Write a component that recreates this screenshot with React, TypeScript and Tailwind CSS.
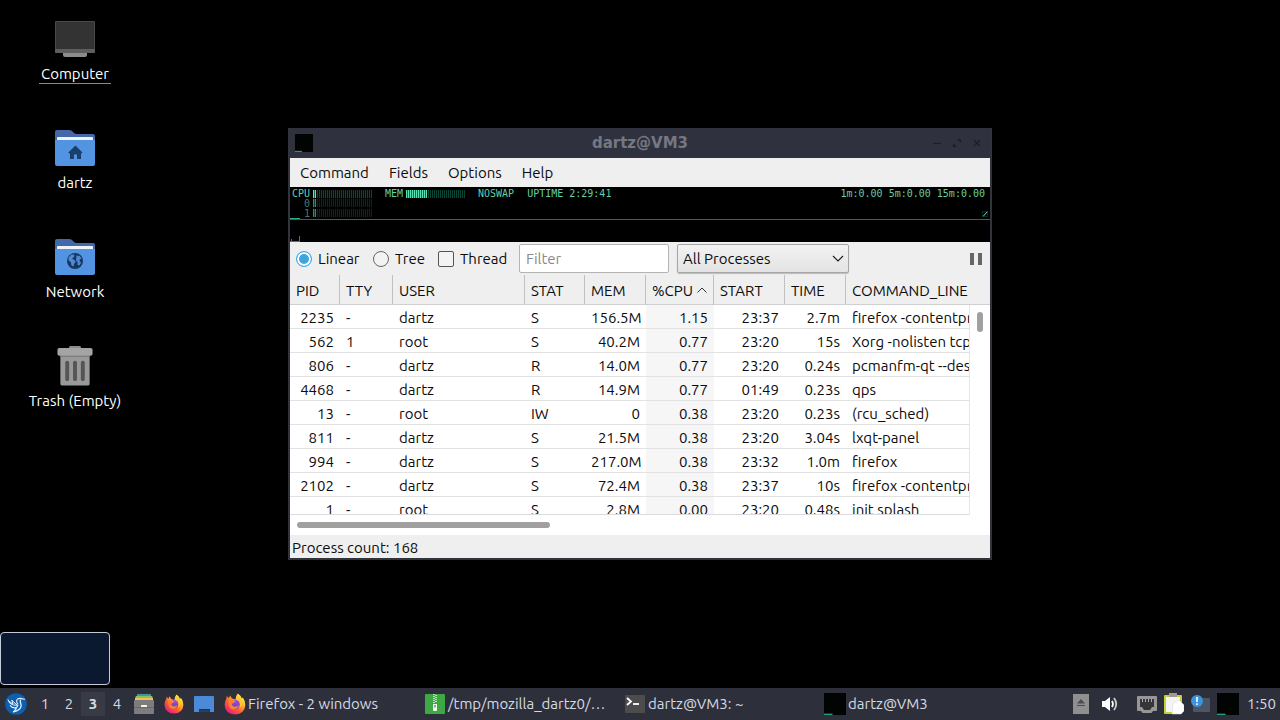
import { useState } from 'react';
import type { ReactNode } from 'react';
import { clsx } from 'clsx';

const columns = [
  { label: 'PID', width: 'w-[50px]', align: 'text-right' },
  { label: 'TTY', width: 'w-[53px]', align: 'text-left' },
  { label: 'USER', width: 'w-[132px]', align: 'text-left' },
  { label: 'STAT', width: 'w-[60px]', align: 'text-left' },
  { label: 'MEM', width: 'w-[61px]', align: 'text-right' },
  { label: '%CPU', width: 'w-[68px]', align: 'text-right' },
  { label: 'START', width: 'w-[71px]', align: 'text-right' },
  { label: 'TIME', width: 'w-[61px]', align: 'text-right' },
  { label: 'COMMAND_LINE', width: '', align: 'text-left' },
];

const processes = [
  ['2235', '-', 'dartz', 'S', '156.5M', '1.15', '23:37', '2.7m', 'firefox -contentpr'],
  ['562', '1', 'root', 'S', '40.2M', '0.77', '23:20', '15s', 'Xorg -nolisten tcp'],
  ['806', '-', 'dartz', 'R', '14.0M', '0.77', '23:20', '0.24s', 'pcmanfm-qt --des'],
  ['4468', '-', 'dartz', 'R', '14.9M', '0.77', '01:49', '0.23s', 'qps'],
  ['13', '-', 'root', 'IW', '0', '0.38', '23:20', '0.23s', '(rcu_sched)'],
  ['811', '-', 'dartz', 'S', '21.5M', '0.38', '23:20', '3.04s', 'lxqt-panel'],
  ['994', '-', 'dartz', 'S', '217.0M', '0.38', '23:32', '1.0m', 'firefox'],
  ['2102', '-', 'dartz', 'S', '72.4M', '0.38', '23:37', '10s', 'firefox -contentpr'],
  ['1', '-', 'root', 'S', '2.8M', '0.00', '23:20', '0.48s', 'init splash'],
];

function FolderIcon({ children }: { children: ReactNode }) {
  return (
    <svg viewBox="0 0 40 40" className="w-10 h-10" aria-hidden="true">
      <path d="M0 4a2 2 0 0 1 2-2h12q2 0 3 1l2 2q1 1 3 1h16a2 2 0 0 1 2 2v14H0z" fill="#4468a8" />
      <rect x="2" y="9" width="36" height="8" rx="1" fill="#eef3fa" />
      <path d="M0 12h40v24a2 2 0 0 1-2 2H2a2 2 0 0 1-2-2z" fill="#5294e2" />
      {children}
    </svg>
  );
}

function ComputerIcon() {
  return (
    <svg viewBox="0 0 40 40" className="w-10 h-10" aria-hidden="true">
      <rect x="0" y="2" width="40" height="32" rx="1" fill="#4a4a4a" />
      <rect x="1" y="3" width="38" height="27" fill="#333" />
      <rect x="0" y="30" width="40" height="4" rx="1" fill="#5e5e5e" />
      <path d="M8 34h24v2a2 2 0 0 1-2 2H10a2 2 0 0 1-2-2z" fill="#8c8c8c" />
    </svg>
  );
}

function HomeIcon() {
  return (
    <FolderIcon>
      <path d="M20.500 17.500l7 7-.8.900H26V31h-4v-4.500h-3V31h-4v-5.600h-.900l-.8-.9z" fill="#1b3f6d" />
    </FolderIcon>
  );
}

function NetworkIcon() {
  return (
    <FolderIcon>
      <circle cx="20" cy="24" r="8" fill="#163762" />
      <path
        d="M13.500 20.500l3-3 3 .3-.5 2.200-2 1.500 2.300 1.500 1.500 1.800-1.600 1.800-.7 3-2-1-.6-3.300-2.400-2zM21.500 18.500l3.200.6 2 2.400-2.200 1 .2 2 1.500 1-1.700 2.800-2-.3.200-3-1.700-1.500.3-2.500z"
        fill="#4f8ad3"
      />
    </FolderIcon>
  );
}

function TrashIcon() {
  return (
    <svg viewBox="0 -1 40 41" className="w-10 h-10" aria-hidden="true">
      <path d="M14 0a1 1 0 0 1 1-1h10a1 1 0 0 1 1 1v3H14z" fill="#8b8b8b" />
      <path d="M5 7h30v31a1.500 1.500 0 0 1-1.500 1.500h-27A1.500 1.500 0 0 1 5 38z" fill="#999" />
      <rect x="2" y="1" width="36" height="8" rx="2" fill="#a4a4a4" />
      <path d="M5 9h30v1H5z" fill="#777" />
      <path d="M12 16v17M20 16v17M28 16v17" stroke="#555" strokeWidth="4" strokeLinecap="round" />
    </svg>
  );
}

const desktopIcons = [
  { label: 'Computer', icon: ComputerIcon, focused: true },
  { label: 'dartz', icon: HomeIcon },
  { label: 'Network', icon: NetworkIcon },
  { label: 'Trash (Empty)', icon: TrashIcon },
];

function QpsIcon({ className }: { className?: string }) {
  return (
    <svg viewBox="0 0 22 22" className={clsx('shrink-0', className)} aria-hidden="true">
      <rect width="22" height="22" fill="#020303" />
      <path d="M0 21.300h8.500" stroke="#2a9a78" strokeWidth="1.400" />
    </svg>
  );
}

function LxqtIcon() {
  return (
    <svg viewBox="0 0 22 22" className="w-[22px] h-[22px]" aria-hidden="true">
      <circle cx="11" cy="11" r="10.800" fill="#0d5fb0" />
      <g fill="none" stroke="#e9f3fc" strokeLinecap="round" strokeLinejoin="round">
        <path d="M19.500 6.300l-4.300-.9q-3-.4-3.600 2.200-.2 1.800 1.200 3.200" strokeWidth="1.100" />
        <path d="M15.500 7q-.8 1.200.2 3.200 1.300 4-1.700 6.300-2 1.600-5.500 2.300" strokeWidth="1.300" />
        <path d="M3 6.800q1 4.400 5.200 5.200l4.300.2-4.200-3.400-1.500-1.700 1.300 4-4.100-2.800" strokeWidth="1" />
        <path d="M5.200 12.500q1.500 2.700 5.300 2.300 2-.5 2.500-2.600M8.500 18.600q2.200-1.300 2.800-3.600" strokeWidth="1.100" />
      </g>
    </svg>
  );
}

function FirefoxIcon({ className }: { className?: string }) {
  return (
    <svg viewBox="0 0 22 22" className={clsx('shrink-0', className)} aria-hidden="true">
      <defs>
        <linearGradient id="fox" x1="0.850" y1="0.100" x2="0.200" y2="0.900">
          <stop offset="0" stopColor="#fff04a" />
          <stop offset="0.350" stopColor="#ffae2b" />
          <stop offset="0.650" stopColor="#ff5a36" />
          <stop offset="1" stopColor="#e8207c" />
        </linearGradient>
        <linearGradient id="globe" x1="0.600" y1="0" x2="0.400" y2="1">
          <stop offset="0" stopColor="#a04be0" />
          <stop offset="1" stopColor="#5a45b8" />
        </linearGradient>
      </defs>
      <path
        d="M13.800 0.600q3 2 3.800 4.600l1.200-.7q2.700 3.500 2.500 7.500Q20.600 21 11 21.500 1.200 21 .6 12q0-3.800 2-6.700V3l2.300 2.200L6 2.500l2 3 3.500 1q.2-3.800 2.300-5.900z"
        fill="url(#fox)"
      />
      <circle cx="11" cy="11.500" r="4.800" fill="url(#globe)" />
      <path d="M4.500 7.500l3.500-1.700 2.300 1.800 1.800.4-2.600 1.900-1.700 1q.6 3 4 2.700 2-.3 3-1.300-1.100 4-5 4.100-4.600-.5-5.300-5z" fill="#ff8030" />
      <path d="M12 6q3.500.4 4.200 3.600.6 3-1 5 3-1.500 3-5.300-.8-4-4.500-6.500z" fill="#ffc83a" />
    </svg>
  );
}

function ArchiverIcon() {
  return (
    <svg viewBox="0 0 20 20" className="w-[22px] h-5 shrink-0" aria-hidden="true">
      <rect width="20" height="20" rx="1" fill="#3ea845" />
      <path d="M9 0v9M11 1v8" stroke="#e8f5e8" strokeWidth="1.500" strokeDasharray="1 1" />
      <path d="M8 10h4v6a1 1 0 0 1-1 1H9a1 1 0 0 1-1-1z" fill="#f4f9f4" />
      <rect x="9.300" y="11" width="1.400" height="2.500" fill="#3ea845" />
    </svg>
  );
}

function TerminalIcon() {
  return (
    <svg viewBox="0 0 22 20" className="w-[22px] h-5 shrink-0" aria-hidden="true">
      <rect x="1" y="1" width="20" height="18" rx="1" fill="#4c4c4c" />
      <path d="M3 4l4 3.500L3 11" fill="none" stroke="#fff" strokeWidth="1.800" />
      <path d="M9 10h6" stroke="#fff" strokeWidth="1.800" />
    </svg>
  );
}

function CabinetIcon() {
  return (
    <svg viewBox="0 0 20 20" className="w-5 h-5" aria-hidden="true">
      <rect x="3" y="0" width="14" height="4" rx="1" fill="#3f9a96" />
      <rect x="1.500" y="2" width="17" height="4" rx="1" fill="#8fbf6a" />
      <rect x="1" y="4" width="18" height="4" fill="#e8c556" />
      <rect y="6" width="20" height="14" rx="1" fill="#7d7d7d" />
      <path d="M0 13.500h20" stroke="#686868" />
      <rect x="7" y="11" width="6" height="2" rx="0.500" fill="#f5f5f5" />
    </svg>
  );
}

function ShowDesktopIcon() {
  return (
    <svg viewBox="0 0 20 16" className="w-5 h-4" aria-hidden="true">
      <path d="M1 0h18a1 1 0 0 1 1 1v15h-4v-3H5v3H0V1a1 1 0 0 1 1-1z" fill="#4a8ad8" />
      <path d="M5 14h10v2H5z" fill="#2b3f60" />
    </svg>
  );
}

function LedBar({ fill }: { fill: string }) {
  return (
    <span className="flex h-2 w-[59px] bg-[repeating-linear-gradient(90deg,#0e4435_0_1px,#020a08_1px_2px)]">
      <span className={clsx('h-full bg-[repeating-linear-gradient(90deg,#5be3b4_0_1px,#14664e_1px_2px)]', fill)} />
    </span>
  );
}

function LedPanel() {
  return (
    <section className="relative bg-black h-[55px] font-['DejaVu_Sans_Mono','Liberation_Mono',monospace] text-[10px] leading-[9px] text-[#5fd0a9]">
      <div className="flex h-8 border-b border-[#555] box-content pl-0.5 pr-[5px]">
        <div className="flex flex-col w-20 pt-0.5">
          <div className="flex items-center justify-between h-[9px]">
            <span>CPU</span>
            <LedBar fill="w-[3px]" />
          </div>
          {['0', '1'].map((core) => (
            <div key={core} className="flex items-center justify-between h-[10px] text-[#4f7467]">
              <span className="pl-3">{core}</span>
              <span className="opacity-60">
                <LedBar fill="w-[3px]" />
              </span>
            </div>
          ))}
        </div>
        <div className="flex items-center justify-between h-[9px] w-20 ml-[13px] mt-0.5">
          <span>MEM</span>
          <LedBar fill="w-[21px]" />
        </div>
        <span className="ml-[13px] mt-0.5">NOSWAP</span>
        <span className="ml-[13px] mt-0.5">UPTIME 2:29:41</span>
        <span className="ml-auto mt-0.5">1m:0.00 5m:0.00 15m:0.00</span>
      </div>
      <svg viewBox="0 0 12 24" className="absolute left-0 bottom-0 w-3 h-6" aria-hidden="true">
        <path d="M0 .5h10" stroke="#2fae85" />
        <path d="M1.500 21v3M9.500 18v6M0 23.500h10" stroke="#6a4fe0" fill="none" />
      </svg>
      <svg viewBox="0 0 6 6" className="absolute right-0.5 top-6 w-1.5 h-1.5" aria-hidden="true">
        <path d="M1 5.500L5.500 0.500" stroke="#7fe0bd" />
        <rect x="0.500" y="0.500" width="5" height="5" stroke="#0e4435" strokeOpacity="0.600" fill="none" />
      </svg>
    </section>
  );
}

function Toolbar() {
  const [view, setView] = useState('linear');
  const [thread, setThread] = useState(false);
  const radio =
    'appearance-none w-4 h-4 rounded-full border border-[#666] bg-[#f3f3f3] checked:border-[#3daee9] checked:bg-[#3ea6dc] checked:shadow-[inset_0_0_0_2px_#fff]';

  return (
    <div className="flex items-center h-[33px] pl-1.5 pr-2 bg-[#efefef]">
      <label className="flex items-center gap-1.5 w-[77px]">
        <input type="radio" name="view" className={radio} checked={view === 'linear'} onChange={() => setView('linear')} />
        Linear
      </label>
      <label className="flex items-center gap-1.5 w-[65px]">
        <input type="radio" name="view" className={radio} checked={view === 'tree'} onChange={() => setView('tree')} />
        Tree
      </label>
      <label className="flex items-center gap-1.5 w-[81px]">
        <input
          type="checkbox"
          className="appearance-none w-4 h-4 rounded-xs border border-[#555] bg-[#f3f3f3] checked:bg-[#3ea6dc]"
          checked={thread}
          onChange={(e) => setThread(e.target.checked)}
        />
        Thread
      </label>
      <input
        type="text"
        placeholder="Filter"
        aria-label="Filter"
        className="w-[150px] h-[29px] px-1.5 bg-white border border-[#b4b4b4] rounded-xs placeholder:text-[#8a8a8a]"
      />
      <div className="relative ml-2">
        <select
          aria-label="Process filter"
          className="appearance-none w-[172px] h-[29px] px-[5px] border border-[#a6a6a6] rounded-xs bg-linear-to-b from-[#f2f2f2] to-[#e4e4e4] shadow-[0_1px_1px_#bbb]"
        >
          <option>All Processes</option>
        </select>
        <svg viewBox="0 0 12 7" className="absolute right-[5px] top-[11px] w-3 h-[7px] pointer-events-none" aria-hidden="true">
          <path d="M1 1l5 5 5-5" fill="none" stroke="#222" strokeWidth="1.200" />
        </svg>
      </div>
      <button className="ml-auto flex gap-1" aria-label="Pause">
        <span className="w-1 h-3 bg-[#666]" />
        <span className="w-1 h-3 bg-[#666]" />
      </button>
    </div>
  );
}

function ProcessTable() {
  return (
    <div className="flex h-60 bg-white">
      <div className="flex-1 min-w-0 overflow-hidden border-b border-[#dcdcdc]">
        <table className="w-full table-fixed border-separate border-spacing-0">
          <thead>
            <tr className="h-[30px] bg-[#efefef]">
              {columns.map((col, i) => (
                <th
                  key={col.label}
                  className={clsx(
                    'p-0 pl-1.5 pt-0.5 leading-5 text-left font-normal whitespace-nowrap border-b border-b-[#d0d0d0]',
                    i < columns.length - 1 && 'border-r border-r-[#c0c0c0]',
                    col.width
                  )}
                >
                  {col.label}
                  {col.label === '%CPU' && (
                    <svg viewBox="0 0 10 6" className="inline w-[10px] h-1.5 ml-1 mb-1" aria-hidden="true">
                      <path d="M.5 5.500L5 1l4.500 4.500" fill="none" stroke="#333" />
                    </svg>
                  )}
                </th>
              ))}
            </tr>
          </thead>
          <tbody>
            {processes.map((row) => (
              <tr key={row[0]} className="h-6">
                {row.map((cell, i) => (
                  <td
                    key={columns[i].label}
                    className={clsx(
                      'pt-[3px] pb-0 leading-5 overflow-hidden whitespace-nowrap border-b border-[#e2e2e2]',
                      columns[i].align,
                      columns[i].label === '%CPU' && 'bg-[#f6f6f6]',
                      i === columns.length - 1 ? 'pl-1.5 pr-0' : 'px-1.5'
                    )}
                  >
                    {cell}
                  </td>
                ))}
              </tr>
            ))}
          </tbody>
        </table>
      </div>
      <div className="w-[21px] flex flex-col">
        <div className="h-[30px] bg-[#efefef] border-b border-[#d0d0d0]" />
        <div className="flex-1 flex justify-center pt-[7px] border-l border-[#e6e6e6]">
          <div className="w-1.5 h-5 rounded-full bg-[#a0a0a0]" />
        </div>
      </div>
    </div>
  );
}

function QpsWindow() {
  return (
    <main className="absolute left-72 top-32 w-[704px] bg-[#2f323e] border-2 border-t-0 border-[#32343c] text-[#0c0c0c]">
      <header className="relative flex items-center justify-between h-[30px] pl-[5px] pr-2">
        <QpsIcon className="w-[18px] h-[18px]" />
        <h1 className="absolute inset-x-0 text-center font-['DejaVu_Sans',sans-serif] font-bold text-[#747883]">dartz@VM3</h1>
        <div className="relative flex gap-2.5 text-[#1c1e27]">
          <button aria-label="Minimize">
            <svg viewBox="0 0 10 10" className="w-2.5 h-2.5">
              <path d="M1 5.500h8" stroke="currentColor" strokeWidth="1.200" />
            </svg>
          </button>
          <button aria-label="Maximize">
            <svg viewBox="0 0 10 10" className="w-2.5 h-2.5" fill="currentColor">
              <path d="M5 1h4v4zM1 5v4h4z" />
            </svg>
          </button>
          <button aria-label="Close">
            <svg viewBox="0 0 10 10" className="w-2.5 h-2.5">
              <path d="M2 2l6 6M8 2L2 8" stroke="currentColor" strokeWidth="1.300" />
            </svg>
          </button>
        </div>
      </header>
      <nav className="flex items-center h-[29px] pl-2.5 gap-5 bg-[#efefef]">
        {['Command', 'Fields', 'Options', 'Help'].map((item) => (
          <button key={item}>{item}</button>
        ))}
      </nav>
      <LedPanel />
      <Toolbar />
      <ProcessTable />
      <div className="h-5 px-[7px] pt-[7px] bg-white">
        <div className="w-[253px] h-1.5 rounded-full bg-[#a0a0a0]" />
      </div>
      <footer className="h-[23px] px-0.5 leading-[26px] bg-[#efefef]">Process count: 168</footer>
    </main>
  );
}

const tasks = [
  { label: 'Firefox - 2 windows', icon: <FirefoxIcon className="w-[22px] h-[22px]" /> },
  { label: '/tmp/mozilla_dartz0/…', icon: <ArchiverIcon /> },
  { label: 'dartz@VM3: ~', icon: <TerminalIcon /> },
  { label: 'dartz@VM3', icon: <QpsIcon className="w-[22px] h-[22px]" /> },
];

function Tray() {
  return (
    <div className="flex items-center ml-auto pr-1">
      <svg viewBox="0 0 16 20" className="w-4 h-5 mr-3" aria-hidden="true">
        <rect width="16" height="20" fill="#8f8f8f" />
        <path d="M8 5l4 4.500H4zM4 11h8v1H4z" fill="#4c4c4c" />
      </svg>
      <svg viewBox="0 0 18 16" className="w-[18px] h-4 mr-[18px]" aria-hidden="true">
        <path d="M1 5h3l5-4v14l-5-4H1z" fill="#fff" />
        <path d="M11 5q2 3 0 6" fill="none" stroke="#fff" strokeWidth="1.800" />
        <path d="M13 2q4.500 6 0 12" fill="none" stroke="#ccc" strokeWidth="1.800" />
      </svg>
      <svg viewBox="0 0 20 17" className="w-5 h-[17px] mr-[7px]" aria-hidden="true">
        <path d="M1 0h18a1 1 0 0 1 1 1v13a1 1 0 0 1-1 1h-3l-1.500 2h-9L4 15H1a1 1 0 0 1-1-1V1a1 1 0 0 1 1-1z" fill="#979797" />
        <path d="M3 3h14v8h-2l-2 3H7l-2-3H3z" fill="#36363a" />
        <path d="M5.500 3v3M8.500 3v3M11.500 3v3M14.500 3v3" stroke="#aaa" />
      </svg>
      <svg viewBox="0 0 20 22" className="w-5 h-[22px] mr-[7px]" aria-hidden="true">
        <rect y="2" width="18" height="19" rx="1" fill="#c3cf3c" />
        <path d="M2 4h14v15H2z" fill="#f4f4f4" />
        <path d="M5 0h8v4H5z" fill="#9b9b93" />
        <path d="M9 10l6-3 5 5v6l-3 3H8z" fill="#fff" stroke="#d3d3d3" strokeWidth="0.500" />
      </svg>
      <svg viewBox="0 0 20 18" className="w-5 h-[18px] mr-1.5" aria-hidden="true">
        <rect x="2" y="3" width="17" height="14" rx="1" fill="#4b5563" />
        <circle cx="6" cy="6" r="6" fill="#3f93dc" />
        <path d="M6 2v5M6 8.300v1.700" stroke="#fff" strokeWidth="1.600" />
      </svg>
      <QpsIcon className="w-[22px] h-[22px] mr-2" />
      <time>1:50</time>
    </div>
  );
}

function Taskbar() {
  return (
    <footer className="relative flex items-center h-8 bg-[#2d303b] text-[#d3dae3]">
      <button className="ml-[5px] mr-1.5" aria-label="Menu">
        <LxqtIcon />
      </button>
      {[1, 2, 3, 4].map((n) => (
        <button key={n} className={clsx('w-6 h-6', n === 3 && 'font-bold bg-[#383b46]')}>
          {n}
        </button>
      ))}
      <div className="flex items-center gap-2.5 ml-[5px] mr-2.5">
        <button aria-label="File manager">
          <CabinetIcon />
        </button>
        <button aria-label="Firefox">
          <FirefoxIcon className="w-5 h-5" />
        </button>
        <button aria-label="Show desktop">
          <ShowDesktopIcon />
        </button>
      </div>
      {tasks.map((task) => (
        <button key={task.label} className="flex items-center gap-0.5 w-[200px] text-left whitespace-nowrap">
          {task.icon}
          {task.label}
        </button>
      ))}
      <Tray />
    </footer>
  );
}

export default function App() {
  return (
    <div className="relative flex flex-col min-h-screen bg-black overflow-hidden font-['Ubuntu','Noto_Sans',sans-serif] text-[15px] leading-5">
      <div className="flex-1 flex flex-col items-start gap-11 pt-[19px]">
        {desktopIcons.map((item) => (
          <button key={item.label} className="w-[150px] flex flex-col items-center gap-[5px] text-white">
            <item.icon />
            <span className={clsx('h-5 leading-5', item.focused && 'px-0.5 border-b border-[#6f86d6]')}>{item.label}</span>
          </button>
        ))}
      </div>
      <QpsWindow />
      <div className="absolute left-0 bottom-[35px] w-[110px] h-[53px] rounded bg-[#0b1930] border border-[#c3cbd8]" />
      <Taskbar />
    </div>
  );
}
